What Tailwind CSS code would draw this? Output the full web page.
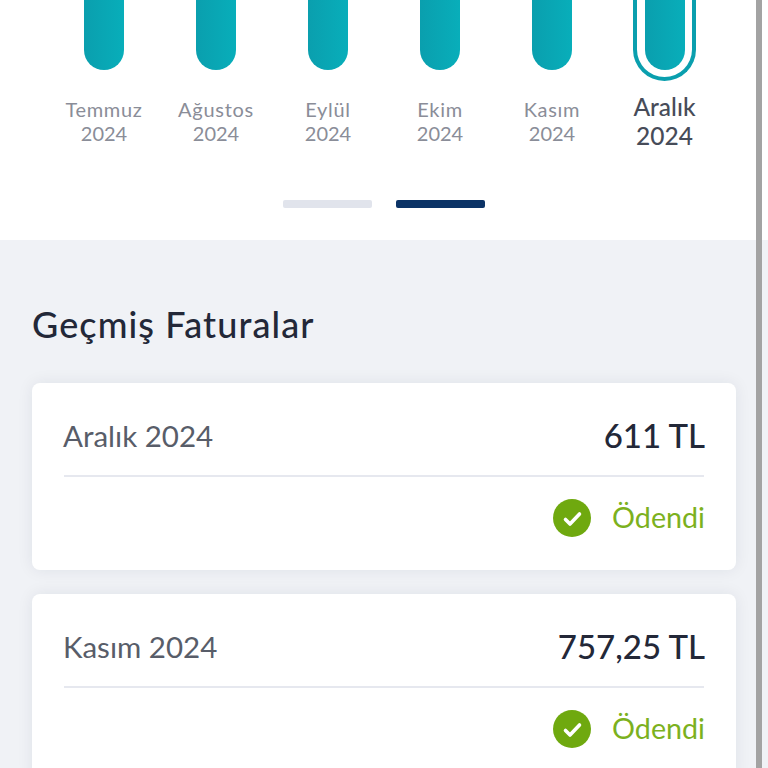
<!DOCTYPE html>
<html lang="tr">
<head>
    <meta charset="UTF-8">
    <meta name="viewport" content="width=device-width, initial-scale=1.0">
    <title>Geçmiş Faturalar</title>
    <script src="https://cdn.jsdelivr.net/npm/@tailwindcss/browser@4"></script>
</head>
<body class="relative h-[768px] overflow-hidden bg-[#f0f2f6] font-['Lato','Open_Sans',sans-serif]">
    <!-- Chart -->
    <section class="h-[240px] bg-white">
        <div class="grid grid-cols-6 w-[672px] ml-[48px]">
            <div class="flex flex-col items-center">
                <div class="w-[40px] h-[70px] rounded-b-[20px] bg-gradient-to-r from-[#0a9fae] to-[#08aeba]"></div>
                <div class="mt-[27px] text-center text-[20px] leading-[24px] text-[#8a8d98]"><span class="tracking-[0.7px]">Temmuz</span><br>2024</div>
            </div>
            <div class="flex flex-col items-center">
                <div class="w-[40px] h-[70px] rounded-b-[20px] bg-gradient-to-r from-[#0a9fae] to-[#08aeba]"></div>
                <div class="mt-[27px] text-center text-[20px] leading-[24px] text-[#8a8d98]"><span class="tracking-[0.7px]">Ağustos</span><br>2024</div>
            </div>
            <div class="flex flex-col items-center">
                <div class="w-[40px] h-[70px] rounded-b-[20px] bg-gradient-to-r from-[#0a9fae] to-[#08aeba]"></div>
                <div class="mt-[27px] text-center text-[20px] leading-[24px] text-[#8a8d98]"><span class="tracking-[0.7px]">Eylül</span><br>2024</div>
            </div>
            <div class="flex flex-col items-center">
                <div class="w-[40px] h-[70px] rounded-b-[20px] bg-gradient-to-r from-[#0a9fae] to-[#08aeba]"></div>
                <div class="mt-[27px] text-center text-[20px] leading-[24px] text-[#8a8d98]"><span class="tracking-[0.7px]">Ekim</span><br>2024</div>
            </div>
            <div class="flex flex-col items-center">
                <div class="w-[40px] h-[70px] rounded-b-[20px] bg-gradient-to-r from-[#0a9fae] to-[#08aeba]"></div>
                <div class="mt-[27px] text-center text-[20px] leading-[24px] text-[#8a8d98]"><span class="tracking-[0.7px]">Kasım</span><br>2024</div>
            </div>
            <div class="flex flex-col items-center">
                <div class="ml-[1px] w-[63px] h-[81px] rounded-b-[32px] border-x-[4px] border-b-[4px] border-[#0a9fae] flex justify-center">
                    <div class="w-[40px] h-[70px] rounded-b-[20px] bg-gradient-to-r from-[#0a9fae] to-[#08aeba]"></div>
                </div>
                <div class="ml-[1px] mt-[11px] text-center text-[24.5px] leading-[29px] font-medium text-[#474c59]">Aralık<br>2024</div>
            </div>
        </div>
        <div class="flex justify-center gap-[24px] mt-[50px] w-[768px]">
            <div class="w-[89px] h-[8px] rounded-[2px] bg-[#e1e4ec]"></div>
            <div class="w-[89px] h-[8px] rounded-[2px] bg-[#0b3366]"></div>
        </div>
    </section>

    <!-- Past invoices -->
    <section class="px-[32px] pt-[62px]">
        <h2 class="text-[36px] leading-[44px] tracking-[1.1px] font-medium text-[#232838]">Geçmiş Faturalar</h2>
        <div class="mt-[37px] flex flex-col gap-[24px] w-[704px]">
            <div class="bg-white rounded-[8px] px-[32px] shadow-[0_0_16px_rgba(30,40,70,0.08)]">
                <div class="h-[94px] pt-[14px] flex items-center justify-between border-b-2 border-[#e6e8ef]">
                    <span class="text-[29.5px] text-[#585d69] -ml-[1px]">Aralık 2024</span>
                    <span class="text-[33px] font-medium text-[#232838] -mr-[1px]">611 TL</span>
                </div>
                <div class="h-[93px] pb-[11px] flex items-center justify-end gap-[21px]">
                    <svg class="w-[38px] h-[38px]" viewBox="0 0 38 38"><circle cx="19" cy="19" r="19" fill="#6fa90f"/><path d="M12.5 20.5l4.5 4.5 9.5-10" fill="none" stroke="#fff" stroke-width="3.6" stroke-linecap="round" stroke-linejoin="round"/></svg>
                    <span class="text-[28.7px] text-[#7cb11e] -mr-[1px]">Ödendi</span>
                </div>
            </div>
            <div class="bg-white rounded-[8px] px-[32px] shadow-[0_0_16px_rgba(30,40,70,0.08)]">
                <div class="h-[94px] pt-[14px] flex items-center justify-between border-b-2 border-[#e6e8ef]">
                    <span class="text-[29.5px] text-[#585d69] -ml-[1px]">Kasım 2024</span>
                    <span class="text-[33px] font-medium text-[#232838] -mr-[1px]">757,25 TL</span>
                </div>
                <div class="h-[93px] pb-[11px] flex items-center justify-end gap-[21px]">
                    <svg class="w-[38px] h-[38px]" viewBox="0 0 38 38"><circle cx="19" cy="19" r="19" fill="#6fa90f"/><path d="M12.5 20.5l4.5 4.5 9.5-10" fill="none" stroke="#fff" stroke-width="3.6" stroke-linecap="round" stroke-linejoin="round"/></svg>
                    <span class="text-[28.7px] text-[#7cb11e] -mr-[1px]">Ödendi</span>
                </div>
            </div>
        </div>
    </section>

    <!-- Scrollbar overlay -->
    <div class="absolute top-0 left-[756px] w-[6px] h-[768px] bg-[#a3a3a3]"></div>
</body>
</html>
